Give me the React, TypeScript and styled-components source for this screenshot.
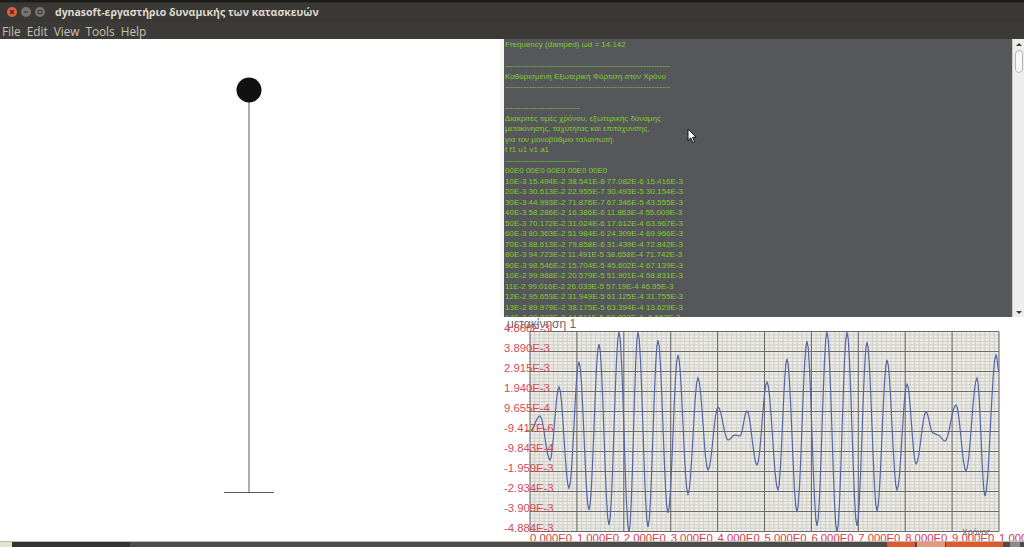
import React from "react";
import styled, { createGlobalStyle } from "styled-components";

const Global = createGlobalStyle`
  html, body { margin: 0; padding: 0; background: #fff; overflow: hidden; }
  #root { width: 1024px; height: 547px; }
`;

const Window = styled.div`
  position: relative;
  width: 1024px;
  height: 547px;
  display: flex;
  flex-direction: column;
  overflow: hidden;
  font-family: "Liberation Sans", Arial, sans-serif;
`;

const TitleBar = styled.header`
  height: 22px;
  flex: none;
  display: flex;
  align-items: center;
  padding: 2px 0 0 7px;
  box-sizing: border-box;
  background: linear-gradient(#1d1c1a 0, #1d1c1a 2px, #3b3935 3px, #3a3834 100%);
`;

const WinButtons = styled.div`
  display: flex;
  align-items: center;
  gap: 4px;
  margin-right: 10px;
`;

const WinButton = styled.span<{ $c: string }>`
  width: 10px;
  height: 10px;
  border-radius: 50%;
  background: ${(p) => p.$c};
  display: flex;
  align-items: center;
  justify-content: center;
`;

const Title = styled.h1`
  margin: 0;
  font: 700 10.5px "Open Sans", "Noto Sans", sans-serif;
  color: #dedad0;
  white-space: nowrap;
`;

const MenuBar = styled.nav`
  height: 17px;
  flex: none;
  display: flex;
  align-items: center;
  background: #3c3a36;
  padding-left: 2px;
  gap: 6px;
`;

const MenuItem = styled.span`
  font: 400 11.8px "Open Sans", "Noto Sans", sans-serif;
  color: #c5c1b6;
`;

const Body = styled.main`
  flex: 1;
  min-height: 0;
  display: flex;
  background: #fff;
`;

const StagePanel = styled.section`
  width: 500px;
  flex: none;
  background: #fff;
`;

const Stage = styled.svg`
  display: block;
  width: 500px;
  height: 504px;
`;

const RightPanel = styled.section`
  flex: 1;
  min-width: 0;
  display: flex;
  flex-direction: column;
`;

const LogRow = styled.div`
  height: 278px;
  flex: none;
  display: flex;
  background: #fafafa;
`;

const Gutter = styled.div`
  width: 4px;
  flex: none;
  background: #f6f6f6;
`;

const Log = styled.pre`
  flex: 1;
  min-width: 0;
  margin: 0;
  padding: 1px 0 0 1px;
  box-sizing: border-box;
  overflow: hidden;
  background: #56575b;
  color: #82cc28;
  font: 400 8px/10.5px "Liberation Sans", Arial, sans-serif;
`;

const Scrollbar = styled.div`
  width: 12px;
  flex: none;
  box-sizing: border-box;
  background: #ededeb;
  border-left: 1px solid #c9c9c7;
  display: flex;
  flex-direction: column;
  align-items: center;
  padding-top: 3px;
`;

const ArrowUp = styled.span`
  width: 0;
  height: 0;
  margin-top: 1px;
  border-left: 3px solid transparent;
  border-right: 3px solid transparent;
  border-bottom: 3px solid #3a3a3a;
`;

const ArrowDown = styled(ArrowUp)`
  margin-top: auto;
  margin-bottom: 3px;
  border-bottom: 0;
  border-top: 3px solid #3a3a3a;
`;

const Thumb = styled.span`
  width: 8px;
  height: 23px;
  margin-top: 4px;
  box-sizing: border-box;
  border: 1px solid #b5b5b3;
  border-radius: 4px;
  background: #f8f8f7;
`;

const ChartPanel = styled.div`
  flex: 1;
  min-height: 0;
  background: #fff;
`;

const Chart = styled.svg`
  display: block;
  width: 524px;
  height: 226px;
  overflow: hidden;
`;

const Taskbar = styled.footer`
  height: 5px;
  flex: none;
  display: flex;
  border-top: 1px solid #b9b9b6;
  margin-top: -1px;
  background: #4d4c48;
`;

const TaskSlot = styled.span<{ $w: number; $c: string }>`
  width: ${(p) => p.$w}px;
  flex: none;
  background: ${(p) => p.$c};
`;

const Cursor = styled.svg`
  position: absolute;
  left: 687px;
  top: 128px;
  width: 10px;
  height: 16px;
`;

const LOG = `Frequency (damped) ωd = 14.142

--------------------------------------------------------------
Καθορισμένη Εξωτερική Φόρτιση στον Χρόνο
--------------------------------------------------------------

----------------------------
Διακριτές τιμές χρόνου, εξωτερικής δύναμης
μετακίνησης, ταχύτητας και επιτάχυνσης,
για τον μονοβάθμιο ταλαντωτή.
t f1 u1 v1 a1
----------------------------
00E0 00E0 00E0 00E0 00E0
10E-3 15.494E-2 38.541E-8 77.082E-6 15.416E-3
20E-3 30.613E-2 22.955E-7 30.493E-5 30.154E-3
30E-3 44.993E-2 71.876E-7 67.346E-5 43.555E-3
40E-3 58.286E-2 16.386E-6 11.863E-4 55.009E-3
50E-3 70.172E-2 31.024E-6 17.612E-4 63.967E-3
60E-3 80.363E-2 51.984E-6 24.309E-4 69.966E-3
70E-3 88.613E-2 79.858E-6 31.439E-4 72.842E-3
80E-3 94.723E-2 11.491E-5 38.658E-4 71.742E-3
90E-3 98.546E-2 15.704E-5 45.602E-4 67.139E-3
10E-2 99.988E-2 20.579E-5 51.901E-4 58.831E-3
11E-2 99.016E-2 26.033E-5 57.19E-4 46.95E-3
12E-2 95.653E-2 31.949E-5 61.125E-4 31.755E-3
13E-2 89.979E-2 38.175E-5 63.394E-4 13.629E-3
14E-2 82.283E-2 44.511E-5 63.823E-4 -6.563E-3`;

// Extrema of the response curve, in page coordinates.
const EXTREMA: [number, number][] = [
  [530, 432], [540, 417], [550, 461], [559, 388], [569, 489], [579, 363], [589, 511], [599, 345],
  [609, 526], [619, 333], [629, 533], [638, 333], [648, 528], [658, 341], [668, 514], [678, 356],
  [688, 495], [698, 379], [708, 471], [718, 408], [728, 441], [735, 436], [740, 437], [747, 412],
  [757, 466], [767, 383], [778, 491], [787, 360], [797, 513], [807, 342], [817, 527], [827, 333],
  [837, 533], [847, 333], [857, 527], [867, 343], [877, 512], [887, 361], [897, 491], [907, 385],
  [916, 465], [926, 413], [933, 434], [938, 436], [945, 442], [956, 406], [966, 472], [977, 379],
  [985, 497], [996, 356], [999, 372],
];

// The chart's SVG starts at page (500, 318).
const OX = 500;
const OY = 318;

function curvePath(): string {
  const pts: string[] = [];
  for (let i = 0; i < EXTREMA.length - 1; i++) {
    const [x0, y0] = EXTREMA[i];
    const [x1, y1] = EXTREMA[i + 1];
    for (let s = 0; s < 8; s++) {
      const t = s / 8;
      const k = (1 - Math.cos(Math.PI * t)) / 2;
      pts.push(`${(x0 + (x1 - x0) * t - OX).toFixed(2)},${(y0 + (y1 - y0) * k - OY).toFixed(2)}`);
    }
  }
  const last = EXTREMA[EXTREMA.length - 1];
  pts.push(`${last[0] - OX},${last[1] - OY}`);
  return "M" + pts.join("L");
}

const PL = 530 - OX;
const PR = 999 - OX;
const PT = 332.5 - OY;
const PB = 532.5 - OY;
const DX = (PR - PL) / 10;
const DY = (PB - PT) / 10;

const YLABELS: [string, number][] = [
  ["4.868E-3", 333], ["3.890E-3", 353], ["2.915E-3", 373], ["1.940E-3", 393], ["9.655E-4", 413],
  ["-9.417E-6", 433], ["-9.843E-4", 453], ["-1.959E-3", 473], ["-2.934E-3", 493], ["-3.909E-3", 513],
  ["-4.884E-3", 533],
];
const XLABELS = ["0.000E0", "1.000E0", "2.000E0", "3.000E0", "4.000E0", "5.000E0", "6.000E0", "7.000E0", "8.000E0", "9.000E0", "1.000E1"];

function ResponseChart() {
  const minorV: number[] = [];
  for (let i = 1; i < 100; i++) if (i % 10) minorV.push(PL + (i * DX) / 10);
  const minorH: number[] = [];
  for (let i = 1; i < 60; i++) if (i % 6) minorH.push(PT + (i * DY) / 6);
  const major = Array.from({ length: 11 }, (_, i) => i);
  return (
    <Chart viewBox="0 0 524 226">
      <rect x={PL} y={PT} width={PR - PL} height={PB - PT} fill="#ecebe6" />
      {minorV.map((x) => (
        <line key={x} x1={x} x2={x} y1={PT} y2={PB} stroke="#cfcfcb" strokeWidth="1" />
      ))}
      {minorH.map((y) => (
        <line key={y} x1={PL} x2={PR} y1={y} y2={y} stroke="#cfcfcb" strokeWidth="1" />
      ))}
      {major.map((i) => (
        <line key={`v${i}`} x1={PL + i * DX} x2={PL + i * DX} y1={PT} y2={PB} stroke="#6a6a68" strokeWidth="1.1" />
      ))}
      {major.map((i) => (
        <line key={`h${i}`} x1={PL} x2={PR} y1={PT + i * DY} y2={PT + i * DY} stroke="#6a6a68" strokeWidth="1.1" />
      ))}
      <path d={curvePath()} fill="none" stroke="#5566a6" strokeWidth="1.2" />
      <line x1={26} x2={34} y1={114} y2={114} stroke="#62b548" strokeWidth="2" />
      <text x={7} y={11} fontFamily="'Liberation Sans', sans-serif" fontSize="12" fill="#666">μετακίνηση 1</text>
      {YLABELS.map(([t, y]) => (
        <text key={t} x={4} y={y - OY} fontFamily="'Liberation Sans', sans-serif" fontSize="11.3" fill="#d24a57">{t}</text>
      ))}
      {XLABELS.map((t, i) => (
        <text key={t} x={PL + i * DX} y={225} fontFamily="'Liberation Sans', sans-serif" fontSize="11.3" fill="#d93a45">{t}</text>
      ))}
      <text x={462} y={218} fontFamily="'Liberation Sans', sans-serif" fontSize="8.5" fill="#6a6a6a">Χρόνος</text>
    </Chart>
  );
}

export default function App() {
  return (
    <Window>
      <Global />
      <TitleBar>
        <WinButtons>
          <WinButton $c="#e0603c">
            <svg width="6" height="6" viewBox="0 0 6 6"><path d="M1 1l4 4M5 1L1 5" stroke="#3c2018" strokeWidth="1.1" /></svg>
          </WinButton>
          <WinButton $c="#77756e">
            <svg width="6" height="6" viewBox="0 0 6 6"><path d="M1 3h4" stroke="#3a3834" strokeWidth="1.1" /></svg>
          </WinButton>
          <WinButton $c="#77756e">
            <svg width="6" height="6" viewBox="0 0 6 6"><rect x="1" y="1.5" width="4" height="3" fill="none" stroke="#3a3834" /></svg>
          </WinButton>
        </WinButtons>
        <Title>dynasoft-εργαστήριο δυναμικής των κατασκευών</Title>
      </TitleBar>
      <MenuBar>
        {["File", "Edit", "View", "Tools", "Help"].map((m) => (
          <MenuItem key={m}>{m}</MenuItem>
        ))}
      </MenuBar>
      <Body>
        <StagePanel>
          <Stage viewBox="0 39 500 504">
            <line x1="249" x2="249" y1="90" y2="492" stroke="#8a8a8a" strokeWidth="1.4" />
            <line x1="224" x2="274" y1="492.5" y2="492.5" stroke="#555" strokeWidth="1" />
            <circle cx="249" cy="90" r="12.5" fill="#111" />
          </Stage>
        </StagePanel>
        <RightPanel>
          <LogRow>
            <Gutter />
            <Log>{LOG}</Log>
            <Scrollbar>
              <ArrowUp />
              <Thumb />
              <ArrowDown />
            </Scrollbar>
          </LogRow>
          <ChartPanel>
            <ResponseChart />
          </ChartPanel>
        </RightPanel>
      </Body>
      <Taskbar>
        <TaskSlot $w={12} $c="#e6e4cf" />
        <TaskSlot $w={118} $c="#33322f" />
        <TaskSlot $w={757} $c="#4d4c48" />
        <TaskSlot $w={28} $c="#dd5a2c" />
        <TaskSlot $w={2} $c="#4d4c48" />
        <TaskSlot $w={28} $c="#e39a7c" />
        <TaskSlot $w={1} $c="#4d4c48" />
        <TaskSlot $w={57} $c="#dd5a2c" />
        <TaskSlot $w={7} $c="#4d4c48" />
        <TaskSlot $w={10} $c="#8c8b87" />
      </Taskbar>
      <Cursor viewBox="0 0 10 16">
        <path d="M1 1v11.500l2.800-2.600 2 4.600 1.800-.8-2-4.400H9.200z" fill="#fff" stroke="#111" strokeWidth="1" />
      </Cursor>
    </Window>
  );
}
